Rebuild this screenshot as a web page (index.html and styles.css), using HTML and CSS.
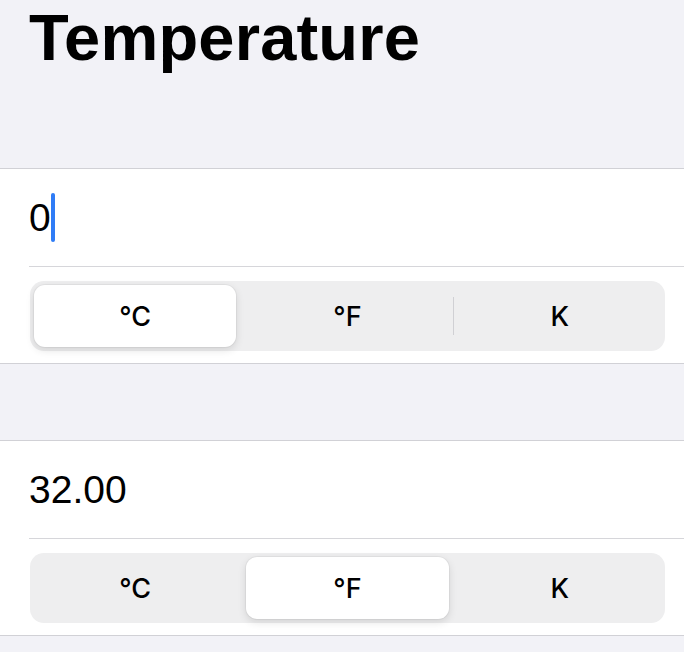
FILE: index.html
```html
<!DOCTYPE html>
<html lang="en">
<head>
<meta charset="utf-8">
<title>Temperature</title>
<link rel="stylesheet" href="styles.css">
</head>
<body>
  <header class="header">
    <h1 class="title">Temperature</h1>
  </header>

  <section class="group">
    <div class="value-row">
      <span class="value">0</span><span class="caret"></span>
    </div>
    <div class="control-row">
      <div class="segmented">
        <div class="seg seg-selected">°C</div>
        <div class="sep sep-hidden"></div>
        <div class="seg">°F</div>
        <div class="sep"></div>
        <div class="seg">K</div>
      </div>
    </div>
  </section>

  <section class="group group-second">
    <div class="value-row">
      <span class="value">32.00</span>
    </div>
    <div class="control-row">
      <div class="segmented">
        <div class="seg">°C</div>
        <div class="sep sep-hidden"></div>
        <div class="seg seg-selected">°F</div>
        <div class="sep sep-hidden"></div>
        <div class="seg">K</div>
      </div>
    </div>
  </section>
</body>
</html>
```

FILE: styles.css
```css
* {
  box-sizing: border-box;
}

html, body {
  margin: 0;
  padding: 0;
}

body {
  background: #f2f2f7;
  font-family: "Liberation Sans", Arial, sans-serif;
  color: #000;
  width: 684px;
  height: 652px;
  overflow: hidden;
}

.header {
  height: 168px;
  padding: 0 0 0 29px;
}

.title {
  margin: 0;
  font-size: 65px;
  line-height: normal;
  font-weight: 700;
  letter-spacing: 0.2px;
}

.group {
  background: #fff;
  border-top: 1px solid #d1d1d6;
  border-bottom: 1px solid #d1d1d6;
}

.group-second {
  margin-top: 76px;
}

.value-row {
  height: 98px;
  margin-left: 29px;
  border-bottom: 1px solid #d6d6da;
  display: flex;
  align-items: center;
}

.value {
  font-size: 39px;
  line-height: 1;
}

.caret {
  display: inline-block;
  width: 4px;
  height: 49px;
  border-radius: 2px;
  background: #2f7cf6;
}

.control-row {
  padding: 14px 19px 12px 30px;
}

.segmented {
  display: flex;
  align-items: center;
  height: 70px;
  padding: 4px;
  border-radius: 14px;
  background: #eeeeef;
}

.seg {
  flex: 1;
  height: 62px;
  display: flex;
  align-items: center;
  justify-content: center;
  border-radius: 11px;
  font-family: "Inter", "Liberation Sans", sans-serif;
  font-size: 27px;
  font-weight: 500;
}

.seg-selected {
  background: #fff;
  box-shadow: 0 3px 8px rgba(0, 0, 0, 0.12), 0 0 0 1px rgba(0, 0, 0, 0.04);
}

.sep {
  width: 1px;
  height: 38px;
  margin: 0 5px 0 4px;
  background: #d0d0d4;
}

.sep-hidden {
  background: transparent;
}
```
